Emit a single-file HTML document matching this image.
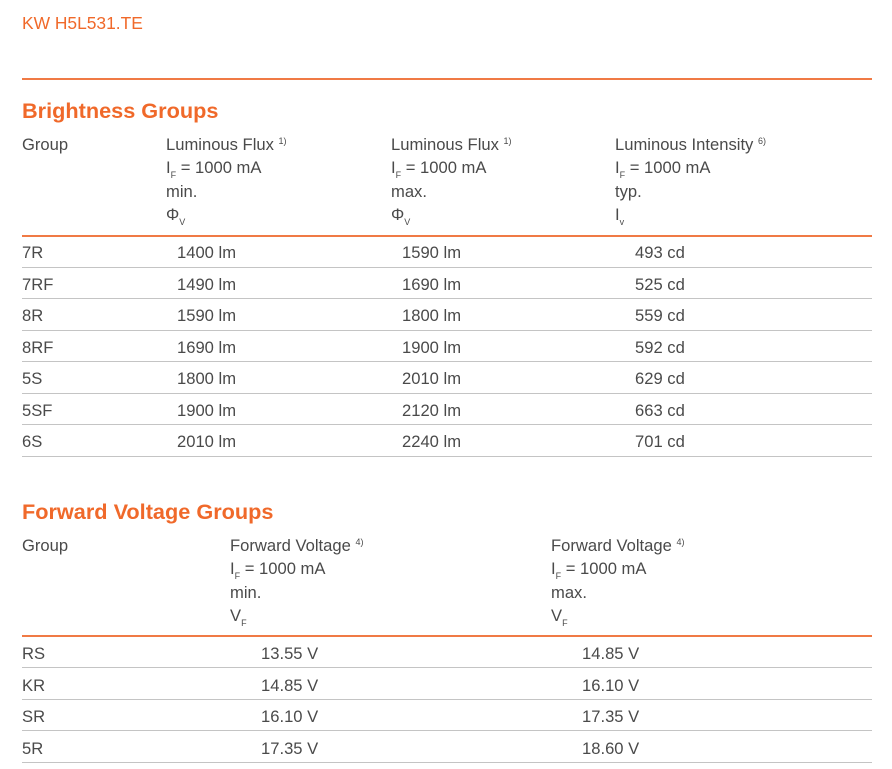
<!DOCTYPE html>
<html><head><meta charset="utf-8"><style>
body{margin:0;width:892px;height:769px;background:#fff;position:relative;font-family:"Liberation Sans",sans-serif;color:#4a4a4a;overflow:hidden}
.t{position:absolute;font-size:16.6px;line-height:20px;white-space:nowrap}
.r{margin-top:2px}
.h{position:absolute;font-size:21.7px;font-weight:bold;color:#f0692a;line-height:24px}
.o{position:absolute;left:22px;width:850px;height:2px;background:#f07a45}
.g{position:absolute;left:22px;width:850px;height:1px;background:#c4c4c4}
sup{font-size:9px;vertical-align:6px;line-height:0}
sub{font-size:9px;vertical-align:-5px;line-height:0}
</style></head><body>
<div class="t" style="left:22px;top:13px;color:#f0692a;font-size:17.4px">KW H5L531.TE</div>
<div class="o" style="top:78px"></div>
<div class="h" style="left:22px;top:99px">Brightness Groups</div>
<div class="t" style="left:22px;top:135px">Group</div>
<div class="t" style="left:166px;top:135px">Luminous Flux <sup>1)</sup></div>
<div class="t" style="left:166px;top:158px">I<sub>F</sub> = 1000 mA</div>
<div class="t" style="left:166px;top:182px">min.</div>
<div class="t" style="left:166px;top:205px">Φ<sub>V</sub></div>
<div class="t" style="left:391px;top:135px">Luminous Flux <sup>1)</sup></div>
<div class="t" style="left:391px;top:158px">I<sub>F</sub> = 1000 mA</div>
<div class="t" style="left:391px;top:182px">max.</div>
<div class="t" style="left:391px;top:205px">Φ<sub>V</sub></div>
<div class="t" style="left:615px;top:135px">Luminous Intensity <sup>6)</sup></div>
<div class="t" style="left:615px;top:158px">I<sub>F</sub> = 1000 mA</div>
<div class="t" style="left:615px;top:182px">typ.</div>
<div class="t" style="left:615px;top:205px">I<sub>v</sub></div>
<div class="o" style="top:235px"></div>

<div class="t r" style="left:22px;top:241px">7R</div><div class="t r" style="left:177px;top:241px">1400 lm</div><div class="t r" style="left:402px;top:241px">1590 lm</div><div class="t r" style="left:635px;top:241px">493 cd</div>
<div class="g" style="top:267px"></div>
<div class="t r" style="left:22px;top:273px">7RF</div><div class="t r" style="left:177px;top:273px">1490 lm</div><div class="t r" style="left:402px;top:273px">1690 lm</div><div class="t r" style="left:635px;top:273px">525 cd</div>
<div class="g" style="top:298px"></div>
<div class="t r" style="left:22px;top:304px">8R</div><div class="t r" style="left:177px;top:304px">1590 lm</div><div class="t r" style="left:402px;top:304px">1800 lm</div><div class="t r" style="left:635px;top:304px">559 cd</div>
<div class="g" style="top:330px"></div>
<div class="t r" style="left:22px;top:336px">8RF</div><div class="t r" style="left:177px;top:336px">1690 lm</div><div class="t r" style="left:402px;top:336px">1900 lm</div><div class="t r" style="left:635px;top:336px">592 cd</div>
<div class="g" style="top:361px"></div>
<div class="t r" style="left:22px;top:367px">5S</div><div class="t r" style="left:177px;top:367px">1800 lm</div><div class="t r" style="left:402px;top:367px">2010 lm</div><div class="t r" style="left:635px;top:367px">629 cd</div>
<div class="g" style="top:393px"></div>
<div class="t r" style="left:22px;top:399px">5SF</div><div class="t r" style="left:177px;top:399px">1900 lm</div><div class="t r" style="left:402px;top:399px">2120 lm</div><div class="t r" style="left:635px;top:399px">663 cd</div>
<div class="g" style="top:424px"></div>
<div class="t r" style="left:22px;top:430px">6S</div><div class="t r" style="left:177px;top:430px">2010 lm</div><div class="t r" style="left:402px;top:430px">2240 lm</div><div class="t r" style="left:635px;top:430px">701 cd</div>
<div class="g" style="top:456px"></div>

<div class="h" style="left:22px;top:500px">Forward Voltage Groups</div>
<div class="t" style="left:22px;top:536px">Group</div>
<div class="t" style="left:230px;top:536px">Forward Voltage <sup>4)</sup></div>
<div class="t" style="left:230px;top:559px">I<sub>F</sub> = 1000 mA</div>
<div class="t" style="left:230px;top:583px">min.</div>
<div class="t" style="left:230px;top:606px">V<sub>F</sub></div>
<div class="t" style="left:551px;top:536px">Forward Voltage <sup>4)</sup></div>
<div class="t" style="left:551px;top:559px">I<sub>F</sub> = 1000 mA</div>
<div class="t" style="left:551px;top:583px">max.</div>
<div class="t" style="left:551px;top:606px">V<sub>F</sub></div>
<div class="o" style="top:635px"></div>
<div class="t r" style="left:22px;top:642px">RS</div><div class="t r" style="left:261px;top:642px">13.55 V</div><div class="t r" style="left:582px;top:642px">14.85 V</div>
<div class="g" style="top:667px"></div>
<div class="t r" style="left:22px;top:674px">KR</div><div class="t r" style="left:261px;top:674px">14.85 V</div><div class="t r" style="left:582px;top:674px">16.10 V</div>
<div class="g" style="top:699px"></div>
<div class="t r" style="left:22px;top:705px">SR</div><div class="t r" style="left:261px;top:705px">16.10 V</div><div class="t r" style="left:582px;top:705px">17.35 V</div>
<div class="g" style="top:730px"></div>
<div class="t r" style="left:22px;top:737px">5R</div><div class="t r" style="left:261px;top:737px">17.35 V</div><div class="t r" style="left:582px;top:737px">18.60 V</div>
<div class="g" style="top:762px"></div>
</body></html>
